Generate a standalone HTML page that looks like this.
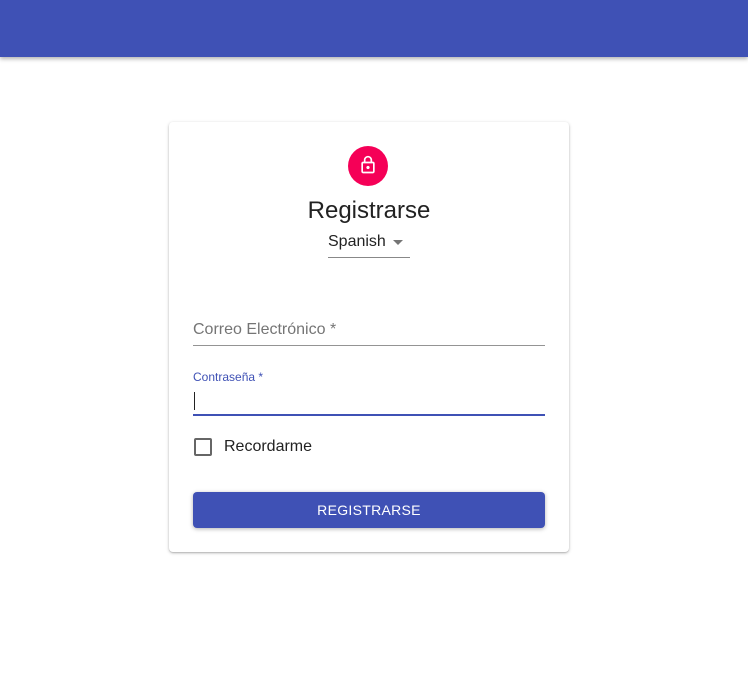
<!DOCTYPE html>
<html><head><style>
body{margin:0;width:748px;height:691px;background:#fff;font-family:"Liberation Sans",Arial,sans-serif;position:relative;overflow:hidden}
.bar{position:absolute;left:0;top:0;width:748px;height:57px;background:#3f51b5;box-shadow:0 2px 4px rgba(0,0,0,.3)}
.card{position:absolute;left:169px;top:122px;width:400px;height:430px;background:#fff;border-radius:4px;box-shadow:0 1px 3px rgba(0,0,0,.25),0 1px 1px rgba(0,0,0,.12)}
.a{position:absolute}
</style></head><body>
<div class="bar"></div>
<div class="card"></div>
<div class="a" style="left:348px;top:146px;width:40px;height:40px;border-radius:50%;background:#f50057"></div>
<svg class="a" style="left:358px;top:155px" width="20" height="20" viewBox="0 0 24 24"><path fill="#fff" d="M18 8h-1V6c0-2.76-2.24-5-5-5S7 3.24 7 6v2H6c-1.1 0-2 .9-2 2v10c0 1.1.9 2 2 2h12c1.1 0 2-.9 2-2V10c0-1.1-.9-2-2-2zM9 6c0-1.66 1.34-3 3-3s3 1.34 3 3v2H9V6zm9 14H6V10h12v10zm-6-3c1.1 0 2-.9 2-2s-.9-2-2-2-2 .9-2 2 .9 2 2 2z"/></svg>
<div class="a" style="left:169px;width:400px;top:197px;text-align:center;font-size:24px;color:#222">Registrarse</div>
<div class="a" style="left:328px;top:233px;font-size:16px;color:#222">Spanish</div>
<div class="a" style="left:393px;top:240px;width:0;height:0;border-left:5px solid transparent;border-right:5px solid transparent;border-top:5px solid #757575"></div>
<div class="a" style="left:328px;top:257px;width:82px;height:1px;background:#888"></div>
<div class="a" style="left:193px;top:321px;font-size:16px;color:#757575">Correo Electrónico *</div>
<div class="a" style="left:193px;top:345px;width:352px;height:1px;background:#949494"></div>
<div class="a" style="left:193px;top:370px;font-size:12px;color:#3f51b5">Contraseña *</div>
<div class="a" style="left:194px;top:392px;width:1px;height:18px;background:#222"></div>
<div class="a" style="left:193px;top:414px;width:352px;height:2px;background:#3f51b5"></div>
<div class="a" style="left:194px;top:438px;width:14px;height:14px;border:2px solid #666;border-radius:2px"></div>
<div class="a" style="left:224px;top:438px;font-size:16px;color:#222">Recordarme</div>
<div class="a" style="left:193px;top:492px;width:352px;height:36px;background:#3f51b5;border-radius:4px;box-shadow:0 1px 4px rgba(0,0,0,.3);color:#fff;font-size:14px;text-align:center;line-height:36px;letter-spacing:.3px">REGISTRARSE</div>
</body></html>
